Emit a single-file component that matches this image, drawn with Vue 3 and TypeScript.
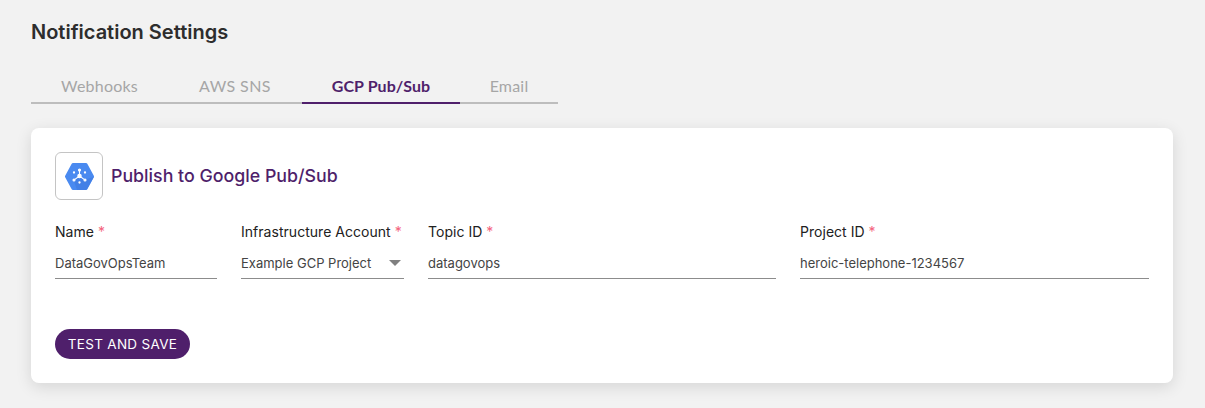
<script setup lang="ts">
interface Field { label: string; value: string; select?: boolean }
const tabs: string[] = ['Webhooks', 'AWS SNS', 'GCP Pub/Sub', 'Email']
const active = 'GCP Pub/Sub'
const fields: Field[] = [
  { label: 'Name', value: 'DataGovOpsTeam' },
  { label: 'Infrastructure Account', value: 'Example GCP Project', select: true },
  { label: 'Topic ID', value: 'datagovops' },
  { label: 'Project ID', value: 'heroic-telephone-1234567' },
]
</script>

<template>
  <div class="page">
    <h1 class="title">Notification Settings</h1>
    <div class="tabs">
      <div v-for="t in tabs" :key="t" class="tab" :class="{ active: t === active }">{{ t }}</div>
    </div>
    <section class="card">
      <header class="head">
        <div class="logo">
          <svg width="29" height="27" viewBox="0 0 29 27">
            <polygon points="8,1.5 21,1.5 27.5,13.5 21,25.5 8,25.5 1.5,13.5" fill="#4a8af0" stroke="#4a8af0" stroke-width="3" stroke-linejoin="round"/>
            <path d="M12 27l-3-9 5.5-5 5.5 3.5 8.8-2.5-6.3 11.2a2.6 2.6 0 0 1-2.2 1.8z" fill="#4380e6"/>
            <g stroke="#fff" stroke-width="1.1" fill="#fff">
              <path d="M14.5 13V8M14.5 13l-4.6 3.4M14.5 13l4.6 3.4" fill="none"/>
              <circle cx="14.5" cy="13" r="1.7"/>
              <circle cx="14.5" cy="7" r="1"/>
              <circle cx="9" cy="17" r="1"/>
              <circle cx="20" cy="17" r="1"/>
              <circle cx="9" cy="9.5" r=".6"/>
              <circle cx="20" cy="9.5" r=".6"/>
              <circle cx="14.5" cy="19.5" r=".6"/>
            </g>
          </svg>
        </div>
        <h2 class="heading">Publish to Google Pub/Sub</h2>
      </header>
      <div class="fields">
        <div v-for="f in fields" :key="f.label" class="field">
          <div class="label">{{ f.label }} <span class="req">*</span></div>
          <div class="input">
            <span>{{ f.value }}</span>
            <span v-if="f.select" class="caret"></span>
          </div>
        </div>
      </div>
      <button class="save" type="button">TEST AND SAVE</button>
    </section>
  </div>
</template>

<style>
html, body { margin: 0; background: #f2f2f2; }
</style>

<style scoped>
.page {
  width: 1205px;
  height: 408px;
  box-sizing: border-box;
  padding: 20px 32px 0 31px;
  background: #f2f2f2;
  font-family: Inter, "Liberation Sans", sans-serif;
  overflow: hidden;
}
.title {
  margin: 0;
  font: 600 20px/24px Inter, "Open Sans", sans-serif;
  color: #2d2d2d;
}
.tabs {
  display: grid;
  grid-template-columns: 137px 134px 158px 98px;
  width: 527px;
  margin-top: 24px;
}
.tab {
  height: 36px;
  box-sizing: border-box;
  border-bottom: 2px solid #bdbdbd;
  font: 400 16px/35px Lato, "Open Sans", sans-serif;
  color: #a6a6a6;
  letter-spacing: .2px;
  text-align: center;
}
.tab:nth-child(2) { letter-spacing: .4px; }
.tab.active {
  color: #4f1f6b;
  border-bottom-color: #4f1f6b;
  font-weight: 700;
  letter-spacing: .1px;
}
.card {
  margin-top: 24px;
  height: 255px;
  box-sizing: border-box;
  padding: 24px;
  background: #fff;
  border-radius: 8px;
  box-shadow: 0 4px 16px rgba(0, 0, 0, .12);
}
.head { display: flex; align-items: center; gap: 8px; }
.logo {
  width: 48px;
  height: 48px;
  box-sizing: border-box;
  border: 1px solid #c4c4c4;
  border-radius: 6px;
  display: flex;
  align-items: center;
  justify-content: center;
}
.heading {
  margin: 0;
  font: 500 17.8px/24px Inter, sans-serif;
  color: #4f1f6b;
}
.fields {
  display: grid;
  grid-template-columns: 162px 163px 348px 349px;
  column-gap: 24px;
  margin-top: 22px;
}
.label {
  font-size: 14px;
  line-height: 20px;
  color: #212121;
  letter-spacing: .03px;
}
.req { color: #f4627c; }
.input {
  margin-top: 7px;
  height: 30px;
  box-sizing: border-box;
  border-bottom: 1px solid #8c8c8c;
  display: flex;
  align-items: center;
  justify-content: space-between;
  font-size: 13px;
  color: #444;
  padding-bottom: 2px;
}
.caret {
  width: 0;
  height: 0;
  margin-right: 3px;
  border-left: 6.5px solid transparent;
  border-right: 6.5px solid transparent;
  border-top: 6px solid #808080;
}
.save {
  display: block;
  margin-top: 50px;
  width: 135px;
  height: 30px;
  padding: 0;
  border: 0;
  border-radius: 15px;
  background: #4f1f6b;
  color: #fff;
  font: 400 13.5px/30px Inter, sans-serif;
  letter-spacing: .3px;
}
</style>
